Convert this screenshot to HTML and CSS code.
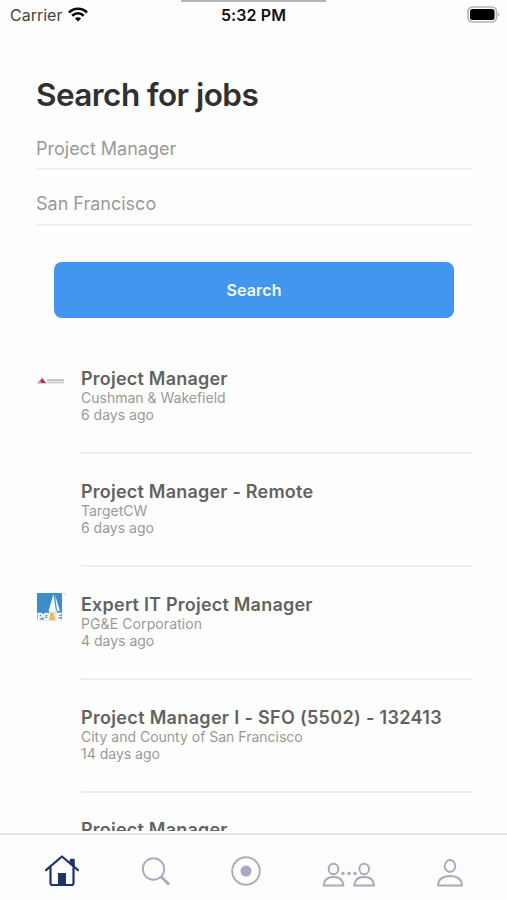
FILE: index.html
```html
<!DOCTYPE html>
<html lang="en">
<head>
<meta charset="utf-8">
<title>Search for jobs</title>
<link rel="stylesheet" href="styles.css">
</head>
<body>
<div class="app">
  <header class="status">
    <div class="notch"></div>
    <div class="carrier"><span>Carrier</span>
      <svg width="20" height="15" viewBox="0 0 20 15" fill="none" stroke="#080808" stroke-width="2.7"><path d="M1 5.5C6 .5 14 .5 19 5.5M4.2 8.8c3.5-3.3 8.100-3.300 11.600 0"/><path d="M10 14.500 6.900 11.400c1.800-1.600 4.400-1.600 6.200 0z" fill="#080808" stroke="none"/></svg>
    </div>
    <div class="time">5:32 PM</div>
    <svg class="battery" width="34" height="18" viewBox="0 0 34 18"><rect x="2" y="1" width="28.500" height="15" rx="4.500" fill="#fff" stroke="#b5b5b5" stroke-width="1.700"/><rect x="4" y="3" width="24.500" height="11" rx="2.500" fill="#000"/><path d="M32 6.500v4q1.300-.5 1.300-2t-1.300-2z" fill="#b5b5b5"/></svg>
  </header>
  <main class="content">
    <h1 class="heading"><span>Search for jobs</span></h1>
    <div class="field first"><span>Project Manager</span></div>
    <div class="field"><span>San Francisco</span></div>
    <button class="search"><span>Search</span></button>
    <section class="jobs">
      <article class="job">
        <div class="logo"><svg class="logo-cw" width="28" height="8" viewBox="0 0 28 8"><path d="M0 6.500 5 .8l5 5.700z" fill="#d18b97"/><path d="m3.500 4 2-2.700L8.500 6H4.500z" fill="#b33345"/><path d="M10 3.200h17M10 5.500h17" stroke="#d0cdd0" stroke-width="1.800"/><path d="M10.500 3.200h16" stroke="#b5b0b3" stroke-width="1.200" stroke-dasharray="2 .6"/></svg></div>
        <div class="info"><h2>Project Manager</h2><p>Cushman &amp; Wakefield</p><p>6 days ago</p></div>
      </article>
      <article class="job">
        <div class="logo"></div>
        <div class="info"><h2>Project Manager - Remote</h2><p>TargetCW</p><p>6 days ago</p></div>
      </article>
      <article class="job">
        <div class="logo"><svg class="logo-pge" width="30" height="30" viewBox="0 0 30 30"><path d="M0 0h25v27H0z" fill="#3f8ccb"/><path d="M16.500 1 11.500 18h7.500zM18 2l2 16h3z" fill="#f4fafc"/><path d="M12 18h8v9h-8z" fill="#dce8ee"/><path d="M0 26.500h25V28H0z" fill="#dfecf7"/><g class="pge-text"><text x=".2" y="27">P</text><text x="6" y="27">G</text><text class="amp" x="12.300" y="27">&amp;</text><text x="19.300" y="27">E</text></g><circle cx="27.500" cy="1.200" r=".8" fill="#c4c8ca"/></svg></div>
        <div class="info"><h2>Expert IT Project Manager</h2><p class="wide">PG&amp;E Corporation</p><p>4 days ago</p></div>
      </article>
      <article class="job">
        <div class="logo"></div>
        <div class="info"><h2 class="long">Project Manager I - SFO (5502) - 132413</h2><p>City and County of San Francisco</p><p>14 days ago</p></div>
      </article>
      <article class="job">
        <div class="logo"></div>
        <div class="info last"><h2>Project Manager</h2></div>
      </article>
    </section>
  </main>
  <nav class="tabs">
    <svg class="home" width="36" height="34" viewBox="0 0 36 34" fill="none" stroke="#1f3467" stroke-width="2.200" stroke-linejoin="round" stroke-linecap="round"><path d="M2 16.200 18 2.500l16 13.700M6.500 14v15q0 2 2 2h19q2 0 2-2V14"/><path d="M27 9.500V6h2.500v6" stroke-width="2.600"/><path d="M14 19h8v12h-8z" fill="#1f3467" stroke="none"/></svg>
    <svg class="find" width="30" height="30" viewBox="0 0 30 30" fill="none" stroke="#a7abbd"><circle cx="12.500" cy="12" r="10.700" stroke-width="1.900"/><path d="m20 19.500 8 8" stroke-width="2.900"/></svg>
    <svg class="record" width="32" height="32" viewBox="0 0 32 32"><circle cx="16" cy="16" r="13.800" fill="none" stroke="#a9acbd" stroke-width="1.900"/><circle cx="16" cy="16" r="5.500" fill="#a6a8c4"/></svg>
    <svg class="network" width="54" height="26" viewBox="0 0 54 26" fill="none" stroke="#a8acba" stroke-width="1.900" stroke-linejoin="round"><ellipse cx="11.500" cy="7" rx="4.800" ry="5.300"/><path d="M1.500 23.500q.7-8.500 10-8.500t10 8.500z"/><ellipse cx="42.200" cy="7" rx="4.800" ry="5.300"/><path d="M32.200 23.500q.7-8.500 10-8.500t10 8.500z"/><g fill="#a8acba" stroke="none"><circle cx="21" cy="11.500" r="1.700"/><circle cx="27" cy="11.500" r="1.700"/><circle cx="33" cy="11.500" r="1.700"/></g></svg>
    <svg class="profile" width="28" height="30" viewBox="0 0 28 30" fill="none" stroke="#a8acba" stroke-width="1.900" stroke-linejoin="round"><ellipse cx="14" cy="8" rx="5.300" ry="6"/><path d="M2 27.500q.5-9.500 12-9.500t12 9.500z"/></svg>
  </nav>
</div>
</body>
</html>
```
FILE: styles.css
```css
* { box-sizing: border-box; }
body { margin: 0; background: #fff; font-family: Inter, "Liberation Sans", sans-serif; }
.app { width: 507px; height: 900px; display: flex; flex-direction: column; overflow: hidden; background: #fefefe; }
.status { position: relative; flex: none; height: 30px; display: grid; grid-template-columns: 1fr auto 1fr; align-items: center; padding: 0 7px 0 10px; }
.notch { position: absolute; top: 0; left: 181px; width: 145px; height: 2px; background: #b5b5b5; }
.carrier { display: flex; align-items: center; gap: 6px; font-size: 16px; color: #444; }
.carrier svg { margin-top: -2px; }
.time { margin-left: -3px; font-size: 16px; font-weight: 600; letter-spacing: 0.1px; color: #111; }
.battery { justify-self: end; margin-top: -1px; }
.content { flex: 1; min-height: 0; overflow: hidden; padding: 0 35px 0 36px; margin-bottom: 2px; }
.heading { margin: 42px 0 0; height: 46px; line-height: 46px; font-size: 31.5px; font-weight: 600; letter-spacing: -0.55px; color: #303030; white-space: nowrap; }
.field { height: 56px; padding-top: 22px; border-bottom: 2px solid #efefef; font-size: 18px; line-height: 24px; color: #999; }
.field.first { height: 52px; padding-top: 19px; }
.search { display: block; width: 400px; height: 56px; margin: 36px 0 0 18px; padding: 0; border: 0; border-radius: 8px; background: #4296ee; color: #f2faff; font: 600 16px/56px Inter, sans-serif; letter-spacing: 0.15px; }
.jobs { margin-top: 23px; }
.job { display: grid; grid-template-columns: 45px 1fr; height: 113px; }
.logo { padding-top: 26px; }
.logo svg { display: block; }
.logo .logo-cw { margin-top: 10px; margin-left: 1px; }
.logo-pge { margin-left: 1px; }
.pge-text { font: 700 9px Inter, sans-serif; fill: #fff; stroke: #fff; stroke-width: 0.5px; }
.pge-text .amp { fill: #f2b34a; stroke: #f2b34a; }
.info { padding-top: 26px; border-bottom: 2px solid #efefef; white-space: nowrap; }
.info.last { padding-top: 25px; }
.info h2 { margin: 0; height: 22px; font-size: 18px; line-height: 23px; font-weight: 600; letter-spacing: 0.22px; color: #626262; }
.info h2.long { letter-spacing: 0.33px; }
.info p { margin: 0; height: 17px; font-size: 14px; line-height: 17px; color: #999; }
.info p.wide { letter-spacing: 0.1px; }
.tabs { flex: none; height: 67px; border-top: 2px solid #e5e5e5; background: #fdfdfe; display: flex; align-items: flex-start; padding-top: 20px; }
.home { margin-left: 44px; margin-top: -1px; }
.find { margin-left: 61px; margin-top: 2px; }
.record { margin-left: 59px; }
.network { margin-left: 60px; margin-top: 7px; }
.profile { margin-left: 60px; margin-top: 3px; }
```
